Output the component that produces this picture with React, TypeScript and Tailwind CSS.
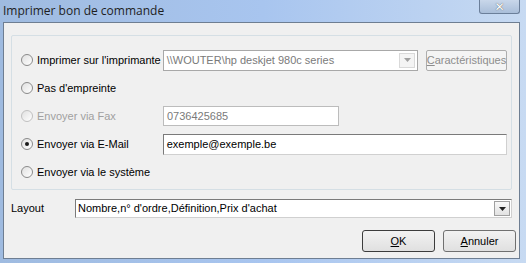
import React from "react";

const font = { fontFamily: "'Liberation Sans', Arial, sans-serif" };

function Radio({ checked, disabled }: { checked?: boolean; disabled?: boolean }) {
  return (
    <div
      className={`relative w-[12px] h-[12px] rounded-full border ${disabled ? "border-[#c0c0c0]" : "border-[#8a8a8a]"} bg-gradient-to-br from-[#e0e0e0] to-white shrink-0`}
    >
      {checked && <div className="absolute left-[3px] top-[3px] w-[4px] h-[4px] rounded-full bg-[#1a1a1a]" />}
    </div>
  );
}

function Arrow({ disabled }: { disabled?: boolean }) {
  return (
    <svg width="7" height="4" viewBox="0 0 7 4">
      <path d="M0 0h7L3.5 4z" fill={disabled ? "#a0a0a0" : "#202020"} />
    </svg>
  );
}

export default function App() {
  return (
    <div className="w-[526px] h-[263px] overflow-hidden relative bg-gradient-to-r from-[#9fbbe0] via-[#a8c5ef] to-[#c7daf2] text-[11px] whitespace-nowrap" style={font}>
      <div className="h-[22px] flex items-center pl-[3px] text-[12px] text-[#1e1e1e]" style={{ fontFamily: "'Open Sans', sans-serif" }}>
        Imprimer bon de commande
      </div>
      <div className="absolute right-[6px] top-0 w-[41px] h-[14px] rounded-b-[3px] border border-t-0 border-[#6b7f9a] bg-gradient-to-b from-[#c9d7ea] to-[#a9bed9] flex items-center justify-center">
        <span className="text-[12px] leading-none font-bold text-white" style={{ fontFamily: "'DejaVu Sans', sans-serif", textShadow: "0 0 1px #333" }}>✕</span>
      </div>
      <div className="absolute left-[3px] right-[6px] top-[22px] bottom-[4px] border border-[#6e7e92] bg-[#f0f0f0] pt-[12px] px-[7px]">
        <div className="border border-[#d5dfe5] rounded-[2px] h-[155px] pl-[9px] pr-[4px] pt-[13px] flex flex-col">
          <div className="flex items-center h-[22px]">
            <div className="flex items-center gap-[4px] w-[142px]">
              <Radio />
              <span className="text-black">Imprimer sur l'imprimante</span>
            </div>
            <div className="w-[256px] h-[21px] border border-[#a8a8a8] bg-white flex items-center pl-[3px] pr-[2px] text-[#7a7a7a]">
              <span className="flex-1">\\WOUTER\hp deskjet 980c series</span>
              <div className="w-[16px] h-[15px] border border-[#d9d9d9] bg-[#f4f4f4] flex items-center justify-center"><Arrow disabled /></div>
            </div>
            <div className="ml-[8px] w-[81px] h-[21px] border border-[#adadad] bg-[#f4f4f4] rounded-[2px] flex items-center justify-center text-[#8d8d8d]">
              <span><span className="underline">C</span>aractéristiques</span>
            </div>
          </div>
          <div className="flex items-center gap-[4px] h-[22px] mt-[6px]">
            <Radio />
            <span className="text-black">Pas d'empreinte</span>
          </div>
          <div className="flex items-center h-[22px] mt-[6px]">
            <div className="flex items-center gap-[4px] w-[142px]">
              <Radio disabled />
              <span className="text-[#a0a0a0]">Envoyer via Fax</span>
            </div>
            <div className="w-[176px] h-[20px] border border-[#bcbcbc] bg-white flex items-center pl-[3px] text-[#7a7a7a]">0736425685</div>
          </div>
          <div className="flex items-center h-[22px] mt-[6px]">
            <div className="flex items-center gap-[4px] w-[142px]">
              <Radio checked />
              <span className="text-black">Envoyer via E-Mail</span>
            </div>
            <div className="w-[345px] h-[21px] border border-[#7a7a7a] border-r-[#d0d0d0] border-b-[#d0d0d0] bg-white flex items-center pl-[3px] text-black">exemple@exemple.be</div>
          </div>
          <div className="flex items-center gap-[4px] h-[22px] mt-[6px]">
            <Radio />
            <span className="text-black">Envoyer via le système</span>
          </div>
        </div>
        <div className="flex items-center mt-[9px] h-[19px]">
          <span className="w-[64px] text-black">Layout</span>
          <div className="flex-1 h-[19px] border border-[#7a7a7a] border-r-[#d0d0d0] border-b-[#d0d0d0] bg-white flex items-center pl-[2px] pr-[1px] text-black">
            <span className="flex-1">Nombre,n° d'ordre,Définition,Prix d'achat</span>
            <div className="w-[16px] h-[15px] border border-[#a0a0a0] bg-gradient-to-b from-[#f8f8f8] to-[#e2e2e2] flex items-center justify-center"><Arrow /></div>
          </div>
        </div>
        <div className="flex justify-end gap-[8px] mt-[12px] -mr-[4px]">
          <div className="w-[73px] h-[22px] rounded-[3px] border border-[#3c3c3c] bg-gradient-to-b from-[#f2f2f2] to-[#e0e0e0] flex items-center justify-center text-black">
            <span><span className="underline">O</span>K</span>
          </div>
          <div className="w-[73px] h-[22px] rounded-[3px] border border-[#707070] bg-gradient-to-b from-[#f2f2f2] to-[#e0e0e0] flex items-center justify-center text-black">
            <span><span className="underline">A</span>nnuler</span>
          </div>
        </div>
      </div>
    </div>
  );
}
